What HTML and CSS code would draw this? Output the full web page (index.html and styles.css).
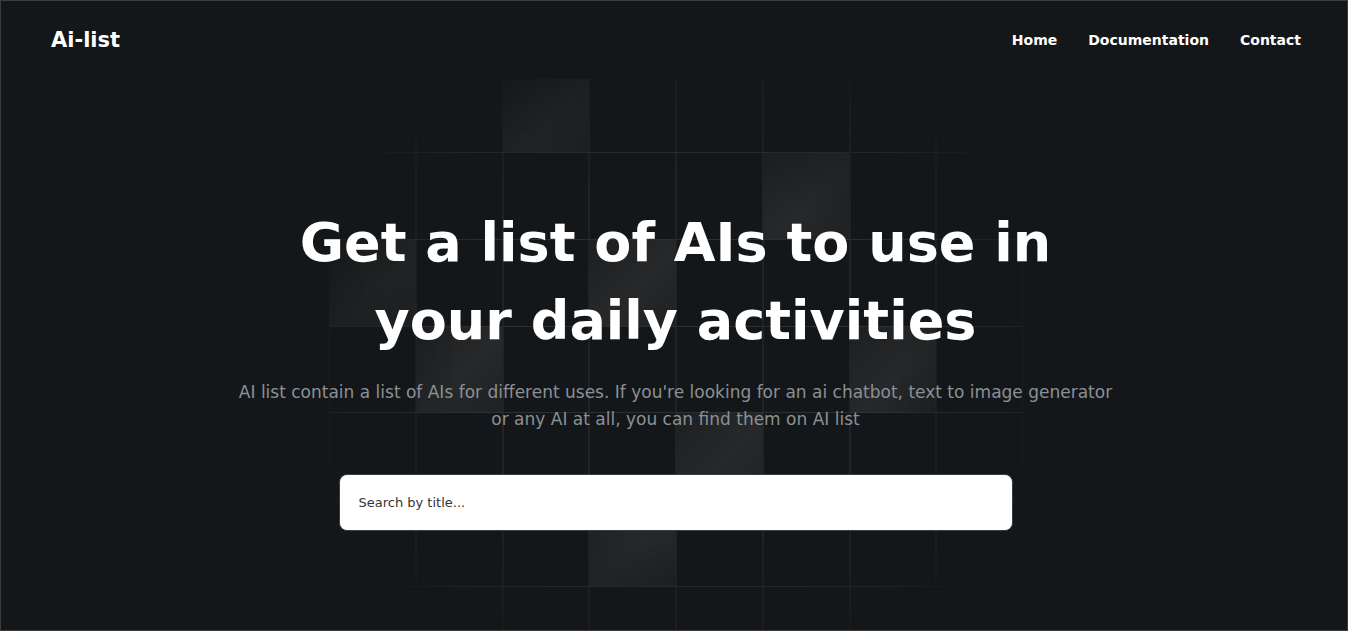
FILE: index.html
```html
<!DOCTYPE html>
<html lang="en">
<head>
<meta charset="utf-8">
<title>Ai-list</title>
<link rel="stylesheet" href="styles.css">
</head>
<body>
<div class="page">
  <header class="topbar">
    <a class="logo" href="#">Ai-list</a>
    <nav class="nav">
      <a href="#">Home</a>
      <a href="#">Documentation</a>
      <a href="#">Contact</a>
    </nav>
  </header>
  <main class="hero">
    <div class="grid" aria-hidden="true">
      <div class="cell"></div><div class="cell"></div><div class="cell lit"></div><div class="cell"></div><div class="cell"></div><div class="cell"></div><div class="cell"></div><div class="cell"></div>
      <div class="cell"></div><div class="cell"></div><div class="cell"></div><div class="cell"></div><div class="cell"></div><div class="cell lit"></div><div class="cell"></div><div class="cell"></div>
      <div class="cell lit"></div><div class="cell"></div><div class="cell"></div><div class="cell lit"></div><div class="cell"></div><div class="cell"></div><div class="cell"></div><div class="cell"></div>
      <div class="cell"></div><div class="cell lit"></div><div class="cell"></div><div class="cell"></div><div class="cell"></div><div class="cell"></div><div class="cell lit"></div><div class="cell"></div>
      <div class="cell"></div><div class="cell"></div><div class="cell"></div><div class="cell"></div><div class="cell lit"></div><div class="cell"></div><div class="cell"></div><div class="cell"></div>
      <div class="cell"></div><div class="cell"></div><div class="cell"></div><div class="cell lit"></div><div class="cell"></div><div class="cell"></div><div class="cell"></div><div class="cell"></div>
      <div class="cell"></div><div class="cell"></div><div class="cell"></div><div class="cell"></div><div class="cell"></div><div class="cell"></div><div class="cell"></div><div class="cell"></div>
    </div>
    <div class="hero-content">
      <h1 class="title">Get a list of AIs to use in<br>your daily activities</h1>
      <p class="lead">AI list contain a list of AIs for different uses. If you're looking for an ai chatbot, text to image generator<br>or any AI at all, you can find them on AI list</p>
      <input class="search" type="text" placeholder="Search by title...">
    </div>
  </main>
</div>
</body>
</html>
```

FILE: styles.css
```css
html, body {
  margin: 0;
  padding: 0;
}
body {
  background: #141719;
  font-family: "DejaVu Sans", Verdana, sans-serif;
}
.page {
  box-sizing: border-box;
  height: 631px;
  border: 1px solid #3b3c3d;
  background: #141719;
  overflow: hidden;
  display: flex;
  flex-direction: column;
}
.topbar {
  height: 78px;
  flex: none;
  display: flex;
  align-items: center;
  justify-content: space-between;
  padding: 0 46px 0 50px;
}
.logo {
  color: #ffffff;
  text-decoration: none;
  font-weight: 700;
  font-size: 21px;
}
.nav {
  display: flex;
  gap: 31px;
}
.nav a {
  color: #ffffff;
  text-decoration: none;
  font-weight: 700;
  font-size: 14px;
}
.hero {
  position: relative;
  flex: 1;
}
.grid {
  position: absolute;
  top: 0;
  left: 50%;
  transform: translateX(calc(-50% + 2px));
  width: 695px;
  height: 560px;
  box-sizing: border-box;
  border-left: 1px solid #2c2f32;
  display: grid;
  grid-template-columns: repeat(8, 86.75px);
  grid-template-rows: 74px repeat(6, 86.75px);
  -webkit-mask-image: radial-gradient(ellipse 58% 60% at 50% 50%, #000 55%, rgba(0,0,0,0.5) 85%, transparent 100%);
  mask-image: radial-gradient(ellipse 58% 60% at 50% 50%, #000 55%, rgba(0,0,0,0.5) 85%, transparent 100%);
  z-index: 0;
}
.cell {
  border-right: 1px solid #2c2f32;
  border-bottom: 1px solid #2c2f32;
}
.cell.lit {
  background: linear-gradient(135deg, #1d1f21 0%, #262829 55%, #1f2123 100%);
}
.hero-content {
  position: relative;
  z-index: 1;
  display: flex;
  flex-direction: column;
  align-items: center;
  padding: 125px 0 0 3px;
  text-align: center;
}
.title {
  margin: 0;
  color: #ffffff;
  font-weight: 700;
  font-size: 54px;
  line-height: 78px;
}
.lead {
  margin: 19px 0 0;
  color: #8b9096;
  font-size: 17px;
  line-height: 27px;
}
.search {
  margin-top: 41px;
  box-sizing: border-box;
  width: 674px;
  height: 57px;
  border: 1px solid #3a3d40;
  border-radius: 8px;
  background: #ffffff;
  padding: 0 19px;
  font-family: "DejaVu Sans", Verdana, sans-serif;
  font-size: 13px;
  color: #222;
  outline: none;
}
.search::placeholder {
  color: #333538;
}
```
